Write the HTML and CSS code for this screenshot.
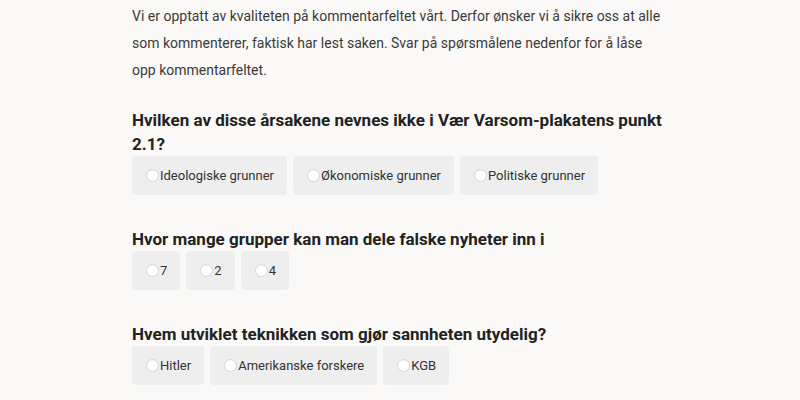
FILE: index.html
```html
<!DOCTYPE html>
<html lang="no">
<head>
<meta charset="utf-8">
<link rel="stylesheet" href="styles.css">
</head>
<body>
<main class="quiz">
  <p class="intro">Vi er opptatt av kvaliteten på kommentarfeltet vårt. Derfor ønsker vi å sikre oss at alle som kommenterer, faktisk har lest saken. Svar på spørsmålene nedenfor for å låse opp kommentarfeltet.</p>

  <section class="question">
    <h2>Hvilken av disse årsakene nevnes ikke i Vær Varsom-plakatens punkt 2.1?</h2>
    <div class="options">
      <label class="option"><span class="radio"></span>Ideologiske grunner</label>
      <label class="option"><span class="radio"></span>Økonomiske grunner</label>
      <label class="option"><span class="radio"></span>Politiske grunner</label>
    </div>
  </section>

  <section class="question">
    <h2>Hvor mange grupper kan man dele falske nyheter inn i</h2>
    <div class="options">
      <label class="option"><span class="radio"></span>7</label>
      <label class="option"><span class="radio"></span>2</label>
      <label class="option"><span class="radio"></span>4</label>
    </div>
  </section>

  <section class="question">
    <h2>Hvem utviklet teknikken som gjør sannheten utydelig?</h2>
    <div class="options">
      <label class="option"><span class="radio"></span>Hitler</label>
      <label class="option"><span class="radio"></span>Amerikanske forskere</label>
      <label class="option"><span class="radio"></span>KGB</label>
    </div>
  </section>
</main>
</body>
</html>
```
FILE: styles.css
```css
html, body {
  margin: 0;
  padding: 0;
  background: #faf9f7;
}
body {
  font-family: Roboto, "Liberation Sans", sans-serif;
  color: #333;
}
.quiz {
  width: 536px;
  margin: 0 auto;
  padding-top: 3px;
}
.intro {
  margin: 0;
  font-size: 14px;
  line-height: 27px;
  color: #3a3a3a;
}
.question {
  margin-top: 24px;
}
.question + .question {
  margin-top: 32px;
}
.question h2 {
  margin: 0;
  font-size: 17px;
  line-height: 24px;
  font-weight: 700;
  color: #222;
}
.options {
  display: flex;
  gap: 6px;
}
.option {
  display: flex;
  align-items: center;
  height: 39px;
  padding: 0 13px 0 14px;
  background: #eeeeee;
  border-radius: 4px;
  font-size: 13px;
  color: #333;
}
.radio {
  width: 11px;
  height: 11px;
  border: 1px solid #d6d6d6;
  border-radius: 50%;
  background: #fff;
  margin-right: 1px;
  box-shadow: inset 0 1px 1px rgba(0, 0, 0, 0.04);
}
```
